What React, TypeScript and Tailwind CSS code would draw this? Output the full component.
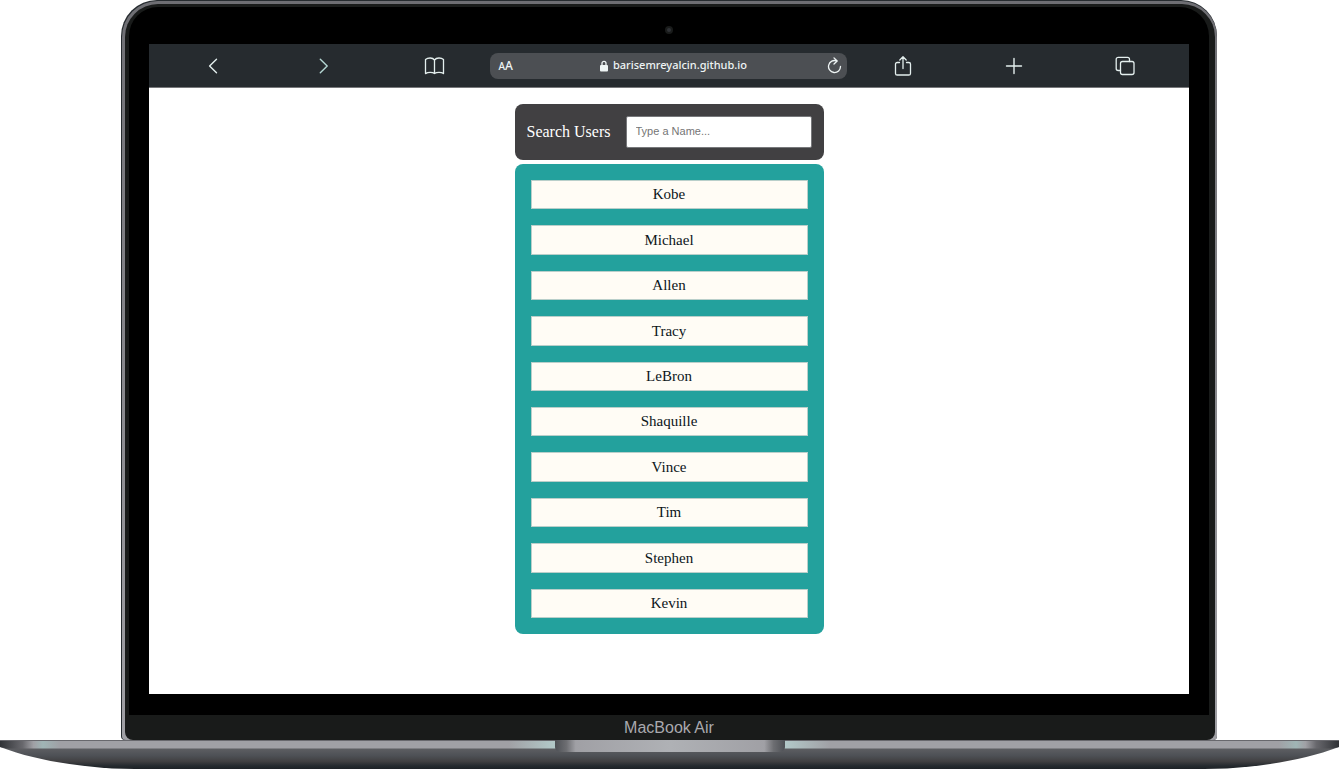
import { useState } from "react";
import type { ReactNode } from "react";

const users = ["Kobe", "Michael", "Allen", "Tracy", "LeBron", "Shaquille", "Vince", "Tim", "Stephen", "Kevin"];

function Icon({ children, width = "1.4" }: { children: ReactNode; width?: string }) {
  return (
    <svg viewBox="0 0 24 24" className="size-6" fill="none" stroke="currentColor" strokeWidth={width} strokeLinecap="round" strokeLinejoin="round" aria-hidden="true">
      {children}
    </svg>
  );
}

function ToolButton({ label, children }: { label: string; children: ReactNode }) {
  return (
    <button type="button" aria-label={label} className="flex h-full items-center justify-center text-[#e4efee]">
      {children}
    </button>
  );
}

function Toolbar() {
  return (
    <header className="grid h-11 shrink-0 grid-cols-[1fr_1fr_1fr_357px_1fr_1fr_1fr] items-center border-b border-[#77787b] bg-[#262b2f] px-2">
      <ToolButton label="Back">
        <Icon><path d="M15.5 5.3 8.6 12l6.9 6.7" /></Icon>
      </ToolButton>
      <ToolButton label="Forward">
        <span className="text-[#b5d8d4]"><Icon><path d="m8.300 5.300 6.900 6.700-6.900 6.700" /></Icon></span>
      </ToolButton>
      <ToolButton label="Bookmarks">
        <Icon width="1.3">
          <path d="M11.500 6C10.500 4.600 9 4 7.200 4c-1.900 0-3.500.5-4.700 1.600v14c1.300-.9 2.900-1.300 4.700-1.300 1.700 0 3.200.4 4.300 1.300 1.200-.9 2.700-1.300 4.500-1.300s3.300.4 4.500 1.300v-14C19.300 4.500 17.800 4 16 4s-3.500.6-4.500 2v13.600" />
        </Icon>
      </ToolButton>
      <div className="flex h-[26px] items-center justify-between rounded-lg bg-[#4c4f53] pr-1 pl-2 font-['Noto_Sans',sans-serif] text-[11px] font-medium text-[#eef4f4]">
        <button type="button" aria-label="Text size" className="flex w-5 items-baseline">
          <span className="text-[10px]">A</span>
          <span className="text-xs">A</span>
        </button>
        <div className="flex items-center gap-1">
          <svg viewBox="0 0 10 12" className="h-3 w-2.5" aria-hidden="true">
            <path d="M3 6V3.300a2 2 0 0 1 4 0V6" fill="none" stroke="currentColor" strokeWidth="1.300" />
            <rect x="1" y="5" width="8" height="6.500" rx="1" fill="currentColor" />
          </svg>
          <span>barisemreyalcin.github.io</span>
        </div>
        <button type="button" aria-label="Reload" className="flex w-4 justify-end">
          <svg viewBox="0 0 16 18" className="h-[18px] w-4 shrink-0" fill="none" stroke="currentColor" strokeWidth="1.300" strokeLinecap="round" strokeLinejoin="round" aria-hidden="true">
            <path d="M9.800 4A6 6 0 1 0 13.500 9.300M7 .9 10.200 4 7 7" />
          </svg>
        </button>
      </div>
      <ToolButton label="Share">
        <Icon width="1.3">
          <path d="M8.500 8.500H6.200c-1 0-1.700.6-1.700 1.600v9.300c0 1 .7 1.600 1.700 1.600h11.600c1 0 1.700-.6 1.700-1.600v-9.300c0-1-.7-1.600-1.700-1.600h-2.300M12 14.500V3M8.800 6 12 2.800 15.200 6" />
        </Icon>
      </ToolButton>
      <ToolButton label="New tab">
        <Icon><path d="M4.500 12h15M12 4.500v15" /></Icon>
      </ToolButton>
      <ToolButton label="Show tabs">
        <Icon width="1.3">
          <rect x="7.500" y="7.500" width="13.500" height="13" rx="2" />
          <path d="M7.500 16.500H5.200a2 2 0 0 1-2-2V5.300a2 2 0 0 1 2-2h9.300a2 2 0 0 1 2 2v2.200" />
        </Icon>
      </ToolButton>
    </header>
  );
}

function UserSearch() {
  const [query, setQuery] = useState("");
  const shown = users.filter((name) => name.toLowerCase().includes(query.toLowerCase()));
  return (
    <main className="flex flex-1 flex-col items-center gap-1 bg-white pt-4 font-['Liberation_Serif',serif]">
      <div className="flex h-14 w-[309px] items-center justify-between rounded-lg bg-[#414042] px-3 text-white">
        <label htmlFor="user-name" className="text-base">Search Users</label>
        <input
          id="user-name"
          type="text"
          value={query}
          onChange={(event) => setQuery(event.target.value)}
          placeholder="Type a Name..."
          className="h-8 w-[186px] rounded-xs border border-[#77787b] bg-white px-[9px] pb-0.5 font-['Liberation_Sans',sans-serif] text-[11px] text-black placeholder:text-[#757575]"
        />
      </div>
      <ul className="flex h-[470px] w-[309px] flex-col gap-4 rounded-lg bg-[#23a19d] p-4">
        {shown.map((name) => (
          <li key={name} className="flex max-h-[30px] flex-1 items-center justify-center border border-[#b9cfca] bg-[#fffcf5] text-[15px] text-[#0c1519]">
            {name}
          </li>
        ))}
      </ul>
    </main>
  );
}

function Base() {
  return (
    <div className="h-[29px]">
      <svg viewBox="0 0 1339 29" preserveAspectRatio="none" className="h-full w-full" aria-hidden="true">
        <defs>
          <linearGradient id="body" x1="0" y1="0" x2="0" y2="1">
            <stop offset="0.1" stopColor="#5c5d61" />
            <stop offset="0.4" stopColor="#4d5055" />
            <stop offset="0.65" stopColor="#414042" />
            <stop offset="0.85" stopColor="#262b2f" />
            <stop offset="1" stopColor="#1d2125" />
          </linearGradient>
          <linearGradient id="edge">
            <stop offset="0" stopColor="#303236" />
            <stop offset="0.017" stopColor="#68686d" />
            <stop offset="0.025" stopColor="#a0a0a5" />
            <stop offset="0.032" stopColor="#9fb5b5" />
            <stop offset="0.045" stopColor="#a0a0a5" />
            <stop offset="0.38" stopColor="#a0a0a5" />
            <stop offset="0.413" stopColor="#b2c8c8" />
            <stop offset="0.5" stopColor="#a0a0a5" />
            <stop offset="0.587" stopColor="#b2c8c8" />
            <stop offset="0.62" stopColor="#a0a0a5" />
            <stop offset="0.955" stopColor="#a0a0a5" />
            <stop offset="0.968" stopColor="#9fb5b5" />
            <stop offset="0.975" stopColor="#a0a0a5" />
            <stop offset="0.983" stopColor="#68686d" />
            <stop offset="1" stopColor="#303236" />
          </linearGradient>
          <linearGradient id="notch">
            <stop offset="0" stopColor="#4d5055" />
            <stop offset="0.05" stopColor="#6d6e72" />
            <stop offset="0.09" stopColor="#a0a0a5" />
            <stop offset="0.5" stopColor="#afb1b5" />
            <stop offset="0.91" stopColor="#a0a0a5" />
            <stop offset="0.95" stopColor="#6d6e72" />
            <stop offset="1" stopColor="#4d5055" />
          </linearGradient>
        </defs>
        <path d="M0 7C32 19 66 25 112 28.500L135 29H1204L1227 28.500C1273 25 1307 19 1339 7Z" fill="url(#body)" />
        <path d="M0 0H1339V7L1332 8.500H7L0 7Z" fill="url(#edge)" />
        <path d="M0 0H1339V1H0Z" fill="#68686d" />
        <path d="M555 0H785V7Q785 12 778 12H562Q555 12 555 7Z" fill="url(#notch)" />
      </svg>
    </div>
  );
}

export default function App() {
  return (
    <div className="bg-white">
      <div className="mr-[122px] ml-[121px] rounded-t-[36px] rounded-b bg-[#262b2f] pt-px pl-px">
        <div className="rounded-t-[36px] rounded-b bg-linear-to-b from-[#6e6e73] to-[#a0a0a5] pt-[3px] pr-0.5 pl-[3px]">
          <div className="rounded-t-[33px] rounded-b-lg bg-[#191b1a] pt-[3px] pr-1.5 pl-1">
            <div className="rounded-t-[29px] bg-black px-5 pb-[21px]">
              <div className="flex h-[37px] items-center justify-center pt-2">
                <span className="flex size-2 items-center justify-center rounded-full bg-[#191b1a]">
                  <span className="size-1 rounded-full bg-[#303236]" />
                </span>
              </div>
              <section className="flex min-h-[650px] flex-col">
                <Toolbar />
                <UserSearch />
              </section>
            </div>
            <div className="flex h-[25px] items-center justify-center font-['Liberation_Sans',sans-serif] text-base text-[#a9a9ae]">
              MacBook Air
            </div>
          </div>
        </div>
      </div>
      <Base />
    </div>
  );
}
